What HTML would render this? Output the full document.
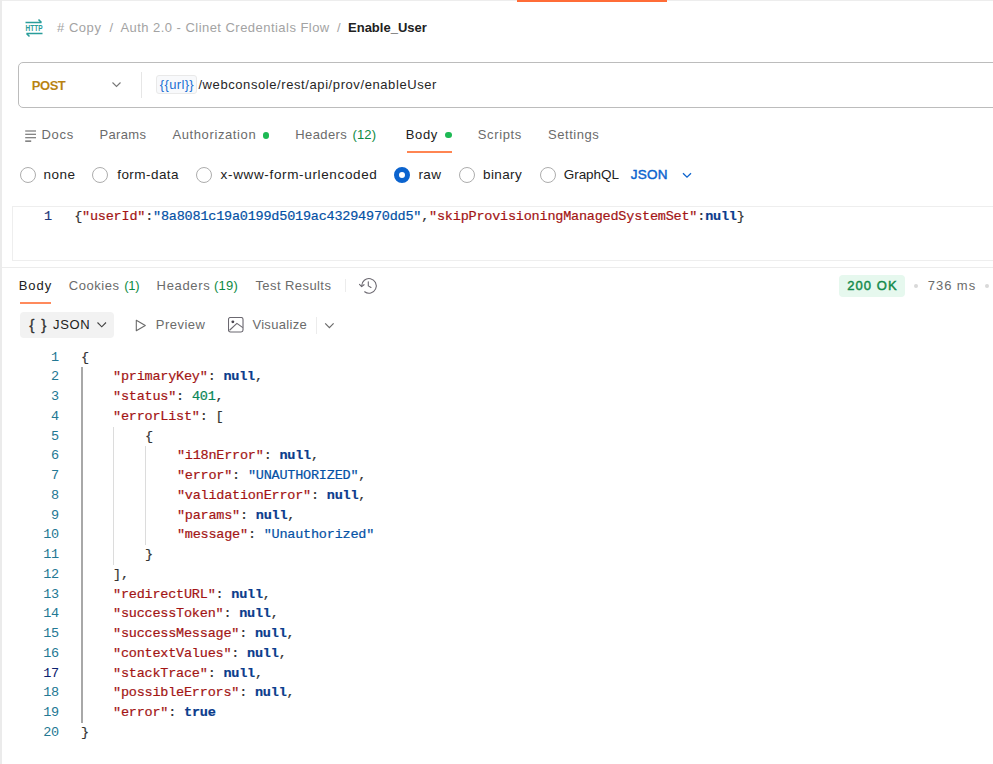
<!DOCTYPE html>
<html><head><meta charset="utf-8"><title>Enable_User</title>
<style>
html,body{margin:0;padding:0;background:#fff;}
body{width:993px;height:764px;position:relative;overflow:hidden;font-family:"Liberation Sans",sans-serif;font-size:13px;color:#6b6b6b;}
.t{position:absolute;white-space:nowrap;line-height:16px;height:16px;}
.m{font-family:"Liberation Mono",monospace;font-size:13.5px;letter-spacing:-0.215px;-webkit-text-stroke:0.2px currentColor;}
.abs{position:absolute;}
.k{color:#a31515;}
.s{color:#0451a5;}
.n{color:#0b3c8c;font-weight:bold;}
.num{color:#098658;}
.ln{color:#237893;text-align:right;width:30px;-webkit-text-stroke:0;}
.c{color:#333;}
.cur{color:#0b216f;}
.radio{position:absolute;width:16px;height:16px;border:1.6px solid #adadad;border-radius:50%;background:#fff;box-sizing:border-box;}
</style></head><body>
<!-- frame -->
<div class="abs" style="left:0;top:0;width:993px;height:1px;background:#ededed"></div>
<div class="abs" style="left:0;top:0;width:2px;height:764px;background:#ebebeb"></div>
<div class="abs" style="left:517px;top:0;width:150px;height:2px;background:#ff6c37"></div>

<!-- request icon -->
<svg class="abs" style="left:24px;top:17.7px" width="20" height="20" viewBox="0 0 20 20"><g fill="none" stroke="#2a9d9a" stroke-width="1.5"><path d="M1.5 4.5H17.5M14.5 1.5L17.5 4.5"/><path d="M18.5 15.5H2.5M5.5 18.5L2.5 15.5"/></g><text x="10" y="13.2" font-family="Liberation Sans, sans-serif" font-weight="bold" font-size="8.5" text-anchor="middle" fill="#2a9d9a" textLength="17" lengthAdjust="spacingAndGlyphs">HTTP</text></svg>

<!-- url bar -->
<div class="abs" style="left:18.2px;top:61.5px;width:1000px;height:46.3px;border:1.5px solid #bcbcbc;border-radius:5px;box-sizing:border-box;"></div>
<svg class="abs" style="left:110.9px;top:81.2px" width="11" height="8" viewBox="0 0 11 8"><path d="M1.5 1.5L5.5 5.5L9.5 1.5" fill="none" stroke="#777" stroke-width="1.1"/></svg>
<div class="abs" style="left:140.6px;top:72px;width:1px;height:25.5px;background:#e6e6e6"></div>
<div class="abs" style="left:156px;top:75px;width:41px;height:19px;background:#f8f9fb;border:1px solid #e9e9e9;border-radius:3px;box-sizing:border-box;"></div>

<!-- request tabs -->
<svg class="abs" style="left:25px;top:129.6px" width="12" height="12" viewBox="0 0 12 12"><g stroke="#5e5e5e" stroke-width="1.05"><path d="M0.2 0.9H11M0.2 4.3H11M0.2 7.7H11M0.2 11.1H6.2"/></g></svg>
<div class="abs" style="left:262.5px;top:132px;width:6.5px;height:6.5px;border-radius:50%;background:#1db954"></div>
<div class="abs" style="left:445px;top:131.8px;width:6.5px;height:6.5px;border-radius:50%;background:#1db954"></div>
<div class="abs" style="left:406.5px;top:151.4px;width:45px;height:1.8px;background:#ff8552"></div>

<!-- body type radios -->
<div class="radio" style="left:19.6px;top:167.0px"></div>
<div class="radio" style="left:91.9px;top:167.0px"></div>
<div class="radio" style="left:196.1px;top:167.0px"></div>
<div class="radio" style="left:394.0px;top:167.0px;border:5.1px solid #0b63ce;"></div>
<div class="radio" style="left:458.9px;top:167.0px"></div>
<div class="radio" style="left:540.2px;top:167.0px"></div>
<svg class="abs" style="left:681.5px;top:171.8px" width="10" height="7" viewBox="0 0 10 7"><path d="M1 1.2L5 5.2L9 1.2" fill="none" stroke="#0b63ce" stroke-width="1.3"/></svg>

<!-- request editor -->
<div class="abs" style="left:12px;top:206px;width:1000px;height:55px;border:1px solid #eeeeee;box-sizing:border-box;"></div>
<div class="t m" style="left:22px;top:208.6px;width:30px;text-align:right;color:#1f3a7a;">1</div>
<div class="t m" style="left:74.2px;top:208.6px;color:#333"><span>{</span><span class="k">"userId"</span>:<span class="s">"8a8081c19a0199d5019ac43294970dd5"</span>,<span class="k">"skipProvisioningManagedSystemSet"</span>:<span class="n">null</span>}</div>
<div class="abs" style="left:2px;top:267px;width:991px;height:1px;background:#ececec"></div>

<!-- response tabs -->
<div class="abs" style="left:20.2px;top:302px;width:31.3px;height:1.7px;background:#ff8a5c"></div>
<div class="abs" style="left:345px;top:279px;width:1px;height:13px;background:#ececec"></div>
<svg class="abs" style="left:358px;top:277px" width="20" height="18" viewBox="0 0 20 18"><g fill="none" stroke="#6b6870" stroke-width="1.1" stroke-linecap="round" stroke-linejoin="round"><path d="M3.65 8.9A7.3 7.3 0 1 1 6.66 14.8"/><path d="M1.5 7.4L3.65 9.6L6 7.7"/><path d="M10.3 4.7V8.9L13 10.5"/></g></svg>
<div class="abs" style="left:839px;top:274.8px;width:66px;height:22px;border-radius:4px;background:#e6f8ee"></div>
<div class="abs" style="left:914.2px;top:283.5px;width:4.2px;height:4.2px;border-radius:50%;background:#d9d9d9"></div>
<div class="abs" style="left:984.5px;top:283.5px;width:4.2px;height:4.2px;border-radius:50%;background:#d9d9d9"></div>

<!-- response toolbar -->
<div class="abs" style="left:20.2px;top:312.3px;width:93.7px;height:25.8px;border-radius:4px;background:#f2f2f2"></div>
<svg class="abs" style="left:95.5px;top:321.4px" width="12" height="8" viewBox="0 0 12 8"><path d="M1.5 1.5L5.75 5.8L10 1.5" fill="none" stroke="#444" stroke-width="1.15"/></svg>
<svg class="abs" style="left:135px;top:318.8px" width="12" height="13" viewBox="0 0 12 13"><path d="M1.3 1.3L10.3 6.5L1.3 11.7Z" fill="none" stroke="#6b6b6b" stroke-width="1.1" stroke-linejoin="round"/></svg>
<svg class="abs" style="left:228.4px;top:317.3px" width="15.5" height="15.5" viewBox="0 0 16 16"><g fill="none" stroke="#6b6870" stroke-width="1.15" stroke-linejoin="round"><rect x="0.5" y="0.5" width="15" height="15" rx="2"/><path d="M1.6 13.7L9.2 6.6L15.3 11"/></g><circle cx="5" cy="5" r="1.5" fill="#4a4650"/></svg>
<div class="abs" style="left:315.5px;top:316.5px;width:1px;height:17px;background:#ececec"></div>
<svg class="abs" style="left:324px;top:321.8px" width="11" height="8" viewBox="0 0 11 8"><path d="M1.2 1.3L5.4 5.6L9.6 1.3" fill="none" stroke="#6b6b6b" stroke-width="1.2"/></svg>

<!-- texts -->
<div class="t" id="b1" style="left:57.00px;top:20.00px;letter-spacing:0.540px;color:#a3a3a3"># Copy</div>
<div class="t" id="b2" style="left:109.40px;top:20.00px;letter-spacing:0.000px;color:#a3a3a3">/</div>
<div class="t" id="b3" style="left:120.40px;top:20.00px;letter-spacing:0.461px;color:#a3a3a3">Auth 2.0 - Clinet Credentials Flow</div>
<div class="t" id="b4" style="left:337.00px;top:20.00px;letter-spacing:0.000px;color:#a3a3a3">/</div>
<div class="t" id="b5" style="left:348.00px;top:20.00px;letter-spacing:0.010px;color:#212121;font-weight:bold">Enable_User</div>
<div class="t" id="u1" style="left:31.80px;top:77.80px;letter-spacing:-0.467px;color:#b98312;font-weight:bold;font-size:13px">POST</div>
<div class="t" id="u2" style="left:159.80px;top:76.80px;letter-spacing:0.350px;color:#1a6fd4;font-size:13px">{{url}}</div>
<div class="t" id="u3" style="left:198.40px;top:76.80px;letter-spacing:0.586px;color:#262626;font-size:13px">/webconsole/rest/api/prov/enableUser</div>
<div class="t" id="r1" style="left:41.40px;top:126.70px;letter-spacing:0.733px;">Docs</div>
<div class="t" id="r2" style="left:99.40px;top:126.70px;letter-spacing:0.340px;">Params</div>
<div class="t" id="r3" style="left:172.40px;top:126.70px;letter-spacing:0.617px;">Authorization</div>
<div class="t" id="r4" style="left:295.20px;top:126.70px;letter-spacing:0.417px;">Headers</div>
<div class="t" id="r5" style="left:352.40px;top:126.70px;letter-spacing:0.200px;color:#0d8a43">(12)</div>
<div class="t" id="r6" style="left:405.80px;top:126.70px;letter-spacing:0.633px;color:#212121">Body</div>
<div class="t" id="r7" style="left:477.80px;top:126.70px;letter-spacing:0.633px;">Scripts</div>
<div class="t" id="r8" style="left:548.00px;top:126.70px;letter-spacing:0.557px;">Settings</div>
<div class="t" id="o1" style="left:43.40px;top:166.62px;letter-spacing:0.533px;color:#212121;font-size:13.5px">none</div>
<div class="t" id="o2" style="left:117.20px;top:166.62px;letter-spacing:0.450px;color:#212121;font-size:13.5px">form-data</div>
<div class="t" id="o3" style="left:220.60px;top:166.62px;letter-spacing:0.650px;color:#212121;font-size:13.5px">x-www-form-urlencoded</div>
<div class="t" id="o4" style="left:418.40px;top:166.62px;letter-spacing:0.450px;color:#212121;font-size:13.5px">raw</div>
<div class="t" id="o5" style="left:483.00px;top:166.62px;letter-spacing:0.400px;color:#212121;font-size:13.5px">binary</div>
<div class="t" id="o6" style="left:563.80px;top:166.62px;letter-spacing:-0.067px;color:#212121;font-size:13.5px">GraphQL</div>
<div class="t" id="o7" style="left:630.80px;top:166.62px;letter-spacing:0.267px;color:#0b63ce;-webkit-text-stroke:0.45px #0b63ce;font-size:13.5px">JSON</div>
<div class="t" id="s1" style="left:18.80px;top:277.60px;letter-spacing:0.900px;color:#212121">Body</div>
<div class="t" id="s2" style="left:68.80px;top:277.60px;letter-spacing:0.550px;">Cookies</div>
<div class="t" id="s3" style="left:124.20px;top:277.60px;letter-spacing:-0.250px;color:#0d8a43">(1)</div>
<div class="t" id="s4" style="left:156.60px;top:277.60px;letter-spacing:0.667px;">Headers</div>
<div class="t" id="s5" style="left:214.00px;top:277.60px;letter-spacing:0.200px;color:#0d8a43">(19)</div>
<div class="t" id="s6" style="left:255.40px;top:277.60px;letter-spacing:0.427px;">Test Results</div>
<div class="t" id="s7" style="left:847.20px;top:277.60px;letter-spacing:1.080px;color:#138a4b;-webkit-text-stroke:0.45px #138a4b">200 OK</div>
<div class="t" id="s8" style="left:927.80px;top:277.60px;letter-spacing:0.940px;">736 ms</div>
<div class="t" id="v1" style="left:29.20px;top:316.53px;letter-spacing:7.000px;color:#333;font-size:15.5px;-webkit-text-stroke:0.3px #333">{}</div>
<div class="t" id="v2" style="left:53.00px;top:316.90px;letter-spacing:0.667px;color:#212121">JSON</div>
<div class="t" id="v3" style="left:155.80px;top:316.90px;letter-spacing:0.483px;">Preview</div>
<div class="t" id="v4" style="left:252.40px;top:316.90px;letter-spacing:0.313px;">Visualize</div>

<!-- response body -->
<div id="code">
<div class="abs" style="left:81.0px;top:367px;width:1.6px;height:356px;background:#a8a8a8"></div>
<div class="abs" style="left:113px;top:427px;width:1px;height:138px;background:#dcdcdc"></div>
<div class="abs" style="left:145px;top:446px;width:1px;height:99px;background:#dcdcdc"></div>
<div class="t m ln" style="left:29px;top:349.50px">1</div>
<div class="t m c" style="left:81.00px;top:349.50px">{</div>
<div class="t m ln" style="left:29px;top:369.26px">2</div>
<div class="t m c" style="left:113.00px;top:369.26px"><span class="k">"primaryKey"</span>: <span class="n">null</span>,</div>
<div class="t m ln" style="left:29px;top:389.03px">3</div>
<div class="t m c" style="left:113.00px;top:389.03px"><span class="k">"status"</span>: <span class="num">401</span>,</div>
<div class="t m ln" style="left:29px;top:408.79px">4</div>
<div class="t m c" style="left:113.00px;top:408.79px"><span class="k">"errorList"</span>: [</div>
<div class="t m ln" style="left:29px;top:428.55px">5</div>
<div class="t m c" style="left:145.10px;top:428.55px">{</div>
<div class="t m ln" style="left:29px;top:448.31px">6</div>
<div class="t m c" style="left:176.90px;top:448.31px"><span class="k">"i18nError"</span>: <span class="n">null</span>,</div>
<div class="t m ln" style="left:29px;top:468.08px">7</div>
<div class="t m c" style="left:176.90px;top:468.08px"><span class="k">"error"</span>: <span class="s">"UNAUTHORIZED"</span>,</div>
<div class="t m ln" style="left:29px;top:487.84px">8</div>
<div class="t m c" style="left:176.90px;top:487.84px"><span class="k">"validationError"</span>: <span class="n">null</span>,</div>
<div class="t m ln" style="left:29px;top:507.60px">9</div>
<div class="t m c" style="left:176.90px;top:507.60px"><span class="k">"params"</span>: <span class="n">null</span>,</div>
<div class="t m ln" style="left:29px;top:527.37px">10</div>
<div class="t m c" style="left:176.90px;top:527.37px"><span class="k">"message"</span>: <span class="s">"Unauthorized"</span></div>
<div class="t m ln" style="left:29px;top:547.13px">11</div>
<div class="t m c" style="left:145.10px;top:547.13px">}</div>
<div class="t m ln" style="left:29px;top:566.89px">12</div>
<div class="t m c" style="left:113.00px;top:566.89px">],</div>
<div class="t m ln" style="left:29px;top:586.66px">13</div>
<div class="t m c" style="left:113.00px;top:586.66px"><span class="k">"redirectURL"</span>: <span class="n">null</span>,</div>
<div class="t m ln" style="left:29px;top:606.42px">14</div>
<div class="t m c" style="left:113.00px;top:606.42px"><span class="k">"successToken"</span>: <span class="n">null</span>,</div>
<div class="t m ln" style="left:29px;top:626.18px">15</div>
<div class="t m c" style="left:113.00px;top:626.18px"><span class="k">"successMessage"</span>: <span class="n">null</span>,</div>
<div class="t m ln" style="left:29px;top:645.95px">16</div>
<div class="t m c" style="left:113.00px;top:645.95px"><span class="k">"contextValues"</span>: <span class="n">null</span>,</div>
<div class="t m ln cur" style="left:29px;top:665.71px">17</div>
<div class="t m c" style="left:113.00px;top:665.71px"><span class="k">"stackTrace"</span>: <span class="n">null</span>,</div>
<div class="t m ln" style="left:29px;top:685.47px">18</div>
<div class="t m c" style="left:113.00px;top:685.47px"><span class="k">"possibleErrors"</span>: <span class="n">null</span>,</div>
<div class="t m ln" style="left:29px;top:705.23px">19</div>
<div class="t m c" style="left:113.00px;top:705.23px"><span class="k">"error"</span>: <span class="n">true</span></div>
<div class="t m ln" style="left:29px;top:725.00px">20</div>
<div class="t m c" style="left:81.00px;top:725.00px">}</div>
</div>
</body></html>
